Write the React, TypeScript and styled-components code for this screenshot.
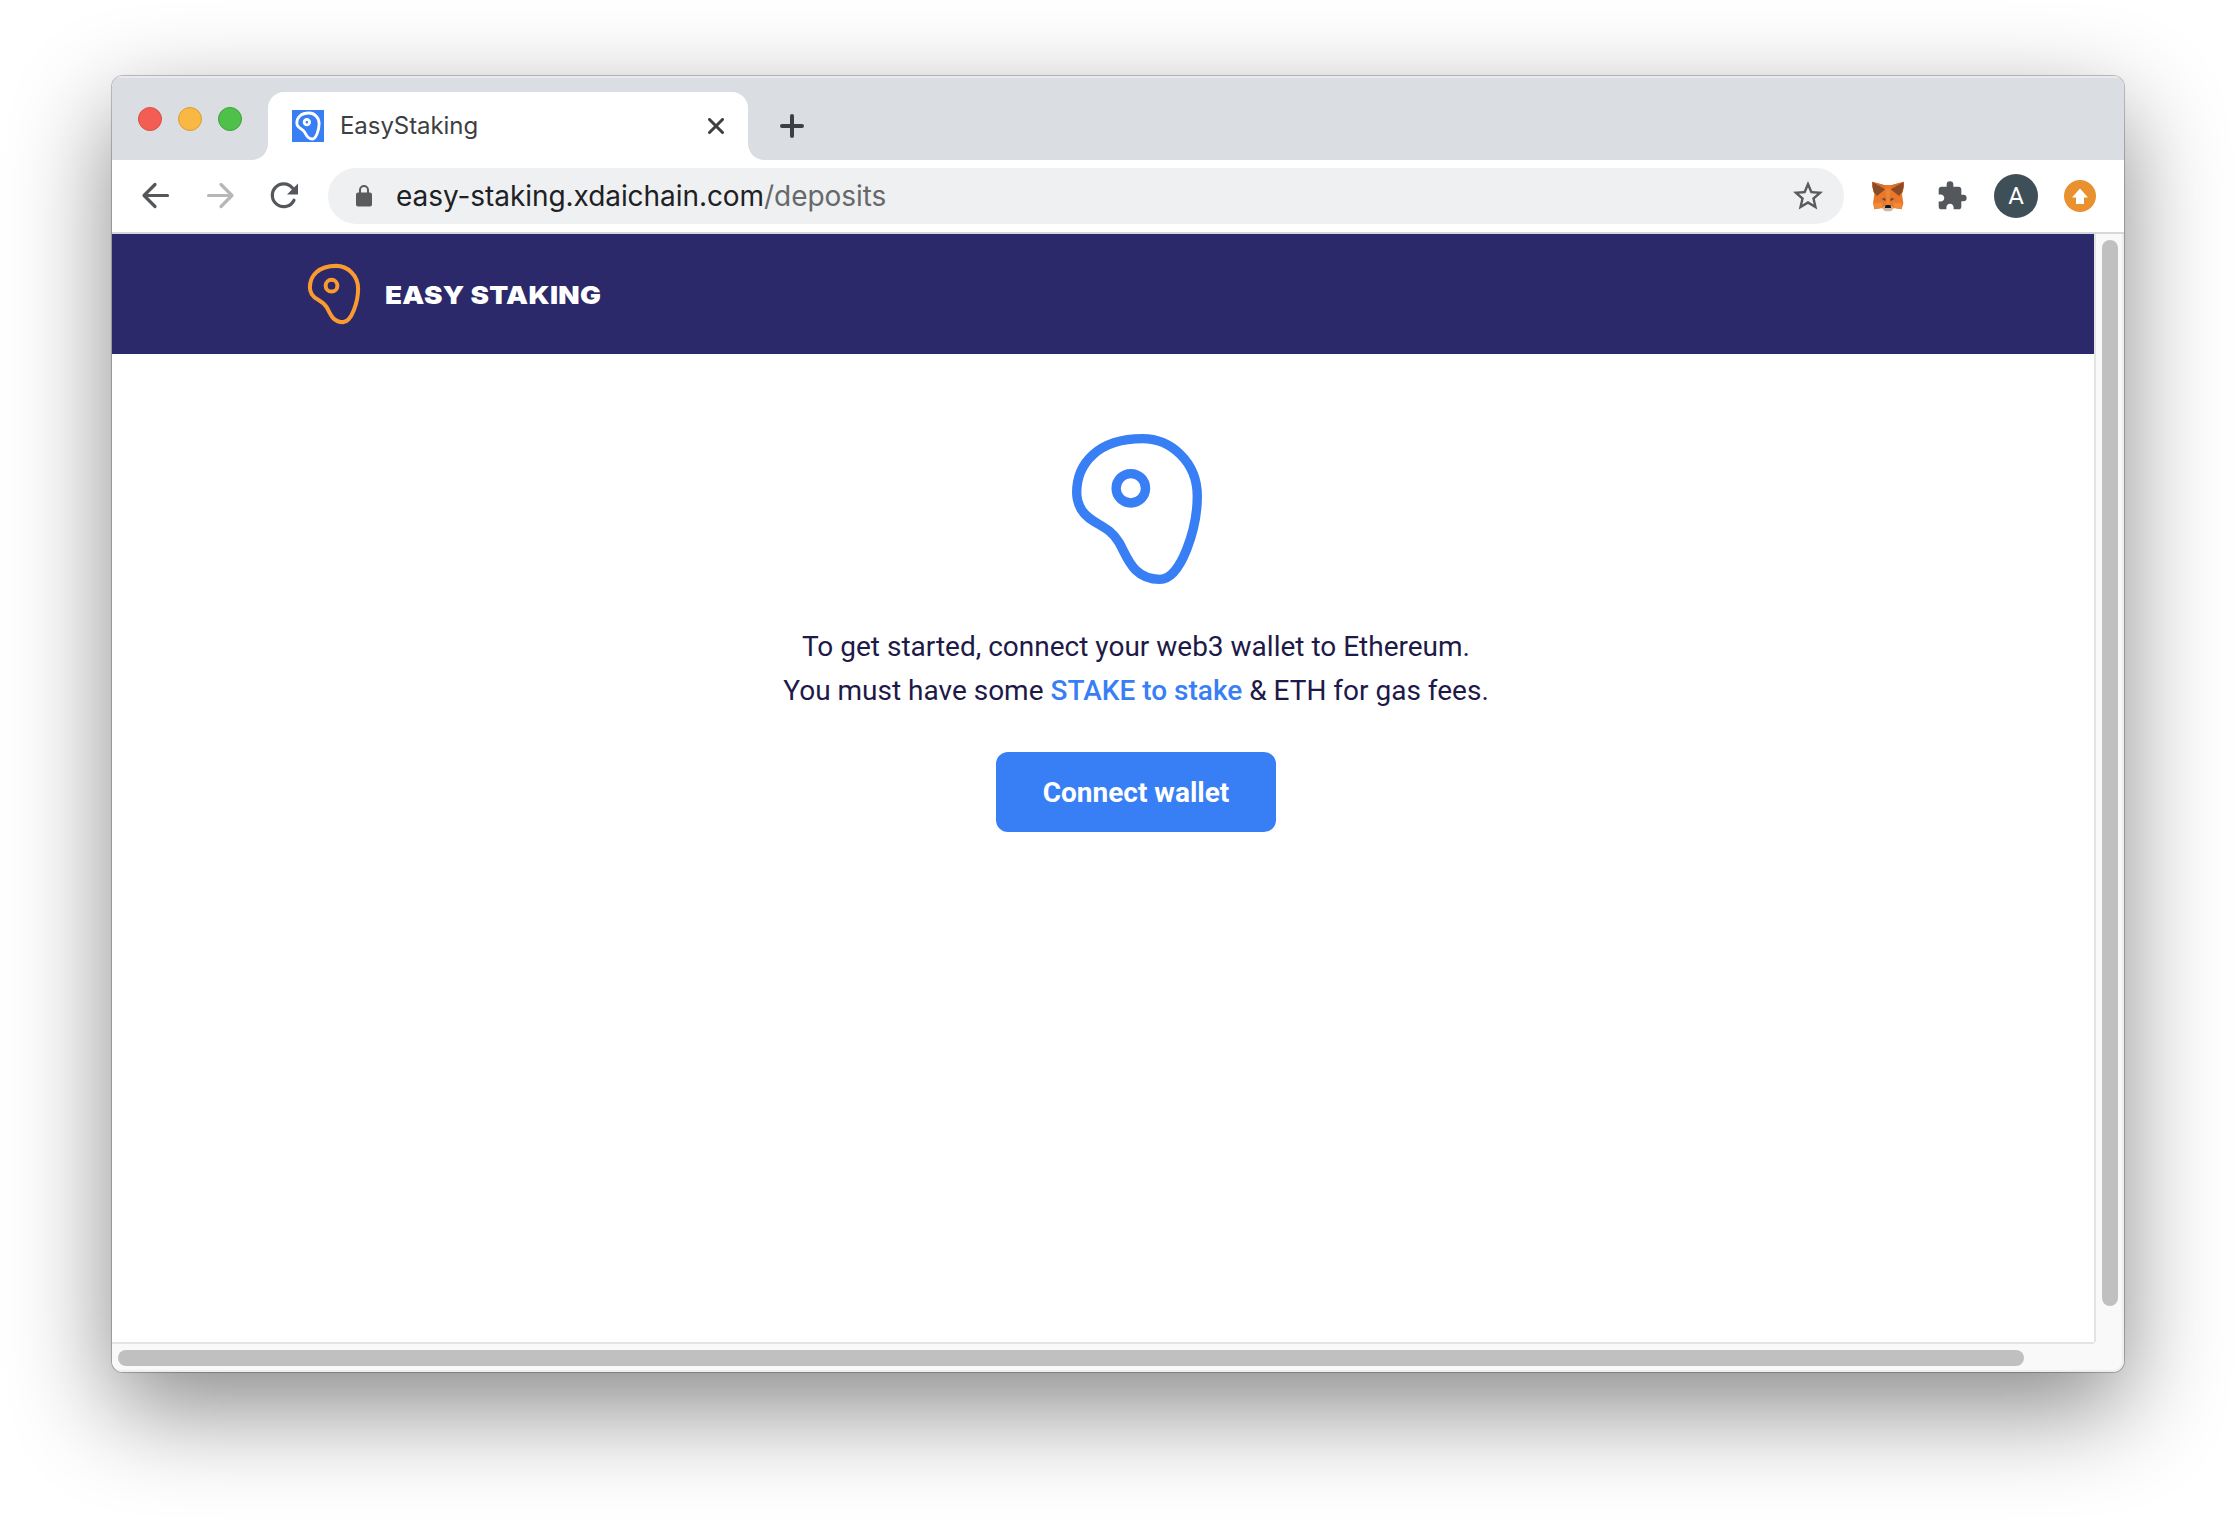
import React from "react";
import styled, { createGlobalStyle } from "styled-components";

const uiFont = `Inter, "Liberation Sans", sans-serif`;
const pageFont = `Roboto, "Liberation Sans", sans-serif`;

const GlobalStyle = createGlobalStyle`
  *, *::before, *::after { box-sizing: border-box; }
  html, body { margin: 0; padding: 0; background: #fff; }
  body { overflow: hidden; }
  svg { display: block; flex: none; }
`;

const Desktop = styled.div`
  width: 2236px;
  height: 1520px;
  padding: 76px 112px 148px;
  overflow: hidden;
  background: #fff;
`;

const BrowserWindow = styled.div`
  display: flex;
  flex-direction: column;
  width: 2012px;
  height: 1296px;
  border-radius: 11px;
  overflow: hidden;
  background: #fff;
  box-shadow: 0 0 0 1px rgba(0, 0, 0, 0.18), 0 0 2px rgba(0, 0, 0, 0.2),
    0 36px 100px rgba(0, 0, 0, 0.47);
`;

const TabStrip = styled.div`
  display: flex;
  height: 84px;
  flex: none;
  background: #dadde2;
  box-shadow: inset 0 2px 0 #e7e9ec;
`;

const TrafficLights = styled.div`
  display: flex;
  gap: 16px;
  width: 140px;
  padding: 31px 0 0 26px;
`;

const Light = styled.span<{ $fill: string; $edge: string }>`
  width: 24px;
  height: 24px;
  border-radius: 50%;
  background: ${(p) => p.$fill};
  border: 1px solid ${(p) => p.$edge};
`;

const TabFoot = styled.span<{ $side: "left" | "right" }>`
  align-self: flex-end;
  width: 16px;
  height: 16px;
  background: radial-gradient(
    circle at ${(p) => (p.$side === "left" ? "0 0" : "100% 0")},
    transparent 15.5px,
    #fff 16.2px
  );
`;

const Tab = styled.div`
  display: flex;
  align-items: center;
  width: 480px;
  height: 68px;
  margin-top: 16px;
  padding: 0 24px;
  border-radius: 16px 16px 0 0;
  background: #fff;
`;

const TabGroup = styled.div`
  display: flex;
`;

const Favicon = styled.span`
  display: flex;
  align-items: center;
  justify-content: center;
  width: 32px;
  height: 32px;
  background: #387ef5;
`;

const TabTitle = styled.span`
  flex: 1;
  margin-left: 16px;
  font: 400 24px/32px ${uiFont};
  letter-spacing: -0.06px;
  color: #3c4043;
`;

const NewTab = styled.span`
  display: flex;
  margin: 38px 0 0 16px;
`;

const Toolbar = styled.div`
  display: flex;
  align-items: center;
  flex: none;
  height: 74px;
  padding: 0 28px;
  border-bottom: 2px solid #d5d7dc;
  background: #fff;
`;

const NavButtons = styled.div`
  display: flex;
  gap: 32px;
`;

const Omnibox = styled.div`
  display: flex;
  align-items: center;
  flex: 1;
  height: 56px;
  margin: 0 28px;
  padding: 0 18px 0 28px;
  border-radius: 28px;
  background: #eff0f2;
`;

const Url = styled.span`
  flex: 1;
  margin-left: 24px;
  font: 400 28px/36px ${uiFont};
  letter-spacing: -0.06px;
  color: #202124;
`;

const UrlPath = styled.span`
  color: #66686b;
`;

const Extensions = styled.div`
  display: flex;
  align-items: center;
  gap: 26px;
`;

const ExtensionPair = styled.div`
  display: flex;
  gap: 32px;
`;

const Avatar = styled.span`
  width: 44px;
  height: 44px;
  border-radius: 50%;
  background: #3f4f58;
  color: #fff;
  font: 400 24px/45px ${pageFont};
  text-align: center;
`;

const Viewport = styled.div`
  display: grid;
  grid-template-columns: 1982px 30px;
  grid-template-rows: 1108px 30px;
`;

const PageClip = styled.div`
  overflow: hidden;
`;

const Page = styled.div`
  width: 2048px;
  height: 1108px;
  background: #fff;
`;

const Header = styled.header`
  display: flex;
  align-items: center;
  gap: 25px;
  height: 120px;
  padding-left: 196px;
  background: #2b296a;
`;

const Brand = styled.span`
  padding-top: 2px;
  font: 900 25px/32px ${uiFont};
  letter-spacing: 0.3px;
  color: #fff;
  transform: scaleX(1.11);
  transform-origin: left center;
`;

const Content = styled.main`
  display: flex;
  flex-direction: column;
  align-items: center;
  padding-top: 80px;
`;

const LogoSlot = styled.div`
  padding-left: 2px;
`;

const Intro = styled.p`
  margin: 41px 0 0;
  font: 400 28px/44px ${pageFont};
  color: #1e1a48;
  text-align: center;
  white-space: nowrap;
`;

const StakeLink = styled.a`
  font-weight: 500;
  color: #387ef5;
`;

const ConnectButton = styled.button`
  width: 280px;
  height: 80px;
  margin-top: 39px;
  padding: 2px 0 0;
  border: 0;
  border-radius: 12px;
  background: #387ef5;
  color: #fff;
  font: 700 28px/78px ${pageFont};
`;

const VerticalTrack = styled.div`
  padding: 6px 4px 0 6px;
  border-left: 2px solid #e4e4e4;
  border-right: 2px solid #eeeeee;
  background: #f9f9f9;
`;

const VerticalThumb = styled.div`
  width: 16px;
  height: 1066px;
  border-radius: 8px;
  background: #c0c0c0;
`;

const HorizontalTrack = styled.div`
  padding: 6px 0 0 6px;
  border-top: 2px solid #e4e4e4;
  border-bottom: 2px solid #eeeeee;
  background: #f9f9f9;
`;

const HorizontalThumb = styled.div`
  width: 1906px;
  height: 16px;
  border-radius: 8px;
  background: #c0c0c0;
`;

const Corner = styled.div`
  border-right: 2px solid #eeeeee;
  border-bottom: 2px solid #eeeeee;
  border-radius: 0 0 11px 0;
  background: #f9f9f9;
`;

function SteakLogo({ width, height, color, stroke = 28 }: { width: number; height: number; color: string; stroke?: number }) {
  return (
    <svg width={width} height={height} viewBox="97 72 389 449" fill="none" stroke={color} strokeWidth={stroke} overflow="visible">
      <path d="M308 86C392 86 472 155 472 258C472 350 425 507 360 507C280 507 264 443 238 397C206 341 152 343 125 298C114 279 111 265 111 248C111 160 175 86 308 86Z" />
      <circle cx="273" cy="234.5" r="44" />
    </svg>
  );
}

function Fox() {
  return (
    <svg width="32" height="32" viewBox="0 0 96 96">
      <path d="M1 5L36 15H60L95 5L96 22L90 43L94 70L89 88L66 84L57 92H39L30 84L7 88L3 70L7 43L1 22Z" fill="#e8792b" />
      <path d="M1 5L40 28L15 48L5 36L1 18ZM95 5L56 28L81 48L91 36L95 18Z" fill="#8a4b26" />
      <path d="M1 5L36 15L40 28ZM95 5L60 15L56 28Z" fill="#d9702a" />
      <path d="M40 28H56L53 60L55 78H41L43 60Z" fill="#f08434" />
      <path d="M7 69L33 68L29 84L7 88ZM89 69L63 68L67 84L89 88Z" fill="#f18936" />
      <path d="M27 57L40 52L42 64ZM69 57L56 52L54 64Z" fill="#c55b22" />
      <path d="M30 55L40 57L39 63ZM66 55L56 57L57 63Z" fill="#334a5c" />
      <path d="M31 84L41 76H55L65 84L57 94H39Z" fill="#cbb9a7" />
      <path d="M41 75H55L58 84H38Z" fill="#171717" />
    </svg>
  );
}

function Arrow({ forward = false }: { forward?: boolean }) {
  return (
    <svg width="32" height="32" viewBox="0 0 32 32" fill="none" stroke={forward ? "#b5b7b9" : "#54575c"} strokeWidth="3.2" strokeLinecap="round" strokeLinejoin="round">
      <path d={forward ? "M4.500 15.500H27.500M17 4.500L28 15.500L17 26.500" : "M27.500 15.500H4.500M15 4.500L4 15.500L15 26.500"} />
    </svg>
  );
}

export default function App() {
  return (
    <>
      <GlobalStyle />
      <Desktop>
        <BrowserWindow>
          <TabStrip>
            <TrafficLights>
              <Light $fill="#f25e54" $edge="#dd4c43" />
              <Light $fill="#f9b843" $edge="#dd9c32" />
              <Light $fill="#4fc04a" $edge="#3da339" />
            </TrafficLights>
            <TabGroup>
              <TabFoot $side="left" />
              <Tab>
                <Favicon>
                  <SteakLogo width={24} height={28} color="#fff" stroke={46} />
                </Favicon>
                <TabTitle>EasyStaking</TabTitle>
                <svg width="16" height="16" viewBox="0 0 16 16" stroke="#3c4043" strokeWidth="3" strokeLinecap="round">
                  <path d="M1.500 1.500L14.500 14.500M14.500 1.500L1.500 14.500" />
                </svg>
              </Tab>
              <TabFoot $side="right" />
            </TabGroup>
            <NewTab>
              <svg width="24" height="24" viewBox="0 0 24 24" stroke="#3c4043" strokeWidth="4" strokeLinecap="round">
                <path d="M2 12H22M12 2V22" />
              </svg>
            </NewTab>
          </TabStrip>
          <Toolbar>
            <NavButtons>
              <Arrow />
              <Arrow forward />
              <svg width="32" height="32" viewBox="0 0 32 32">
                <path d="M26 20.200A11.400 11.400 0 1 1 24.500 8" fill="none" stroke="#54575c" strokeWidth="3.2" strokeLinecap="round" />
                <path d="M30 3.500V14.500H19Z" fill="#54575c" />
              </svg>
            </NavButtons>
            <Omnibox>
              <svg width="16" height="22" viewBox="0 0 16 22">
                <path d="M4 9V5A4 4 0 0 1 12 5V9" fill="none" stroke="#5a5b5d" strokeWidth="2" />
                <rect y="7.500" width="16" height="14" rx="2" fill="#5a5b5d" />
              </svg>
              <Url>
                easy-staking.xdaichain.com<UrlPath>/deposits</UrlPath>
              </Url>
              <svg width="36" height="36" viewBox="0 0 24 24" fill="#5a5b5d">
                <path d="M22 9.240l-7.190-.620L12 2 9.190 8.630 2 9.240l5.460 4.730L5.820 21 12 17.270 18.180 21l-1.630-7.030L22 9.240zM12 15.400l-3.760 2.270 1-4.280-3.320-2.880 4.380-.380L12 6.100l1.710 4.040 4.380.380-3.320 2.880 1 4.280L12 15.400z" />
              </svg>
            </Omnibox>
            <Extensions>
              <ExtensionPair>
                <Fox />
                <svg width="32" height="32" viewBox="0 0 24 24" fill="#54575c">
                  <path d="M20.500 11H19V7c0-1.100-.900-2-2-2h-4V3.500a2.500 2.500 0 0 0-5 0V5H4c-1.100 0-1.990.900-1.990 2v3.800H3.500c1.490 0 2.700 1.210 2.700 2.700s-1.210 2.700-2.700 2.700H2V20c0 1.100.900 2 2 2h3.800v-1.500c0-1.490 1.210-2.700 2.700-2.700s2.700 1.210 2.700 2.700V22H17c1.100 0 2-.900 2-2v-4h1.500a2.500 2.500 0 0 0 0-5z" />
                </svg>
              </ExtensionPair>
              <Avatar>A</Avatar>
              <svg width="32" height="32" viewBox="0 0 32 32">
                <circle cx="16" cy="16" r="16" fill="#e9912f" />
                <path d="M16 8.500L24 17.500H20V24H12V17.500H8Z" fill="#fff" />
              </svg>
            </Extensions>
          </Toolbar>
          <Viewport>
            <PageClip>
              <Page>
                <Header>
                  <SteakLogo width={52} height={60} color="#fb9a2f" stroke={30} />
                  <Brand>EASY STAKING</Brand>
                </Header>
                <Content>
                  <LogoSlot>
                    <SteakLogo width={130} height={150} color="#387ef5" />
                  </LogoSlot>
                  <Intro>
                    To get started, connect your web3 wallet to Ethereum.
                    <br />
                    You must have some <StakeLink>STAKE to stake</StakeLink> &amp; ETH for gas fees.
                  </Intro>
                  <ConnectButton>Connect wallet</ConnectButton>
                </Content>
              </Page>
            </PageClip>
            <VerticalTrack>
              <VerticalThumb />
            </VerticalTrack>
            <HorizontalTrack>
              <HorizontalThumb />
            </HorizontalTrack>
            <Corner />
          </Viewport>
        </BrowserWindow>
      </Desktop>
    </>
  );
}
